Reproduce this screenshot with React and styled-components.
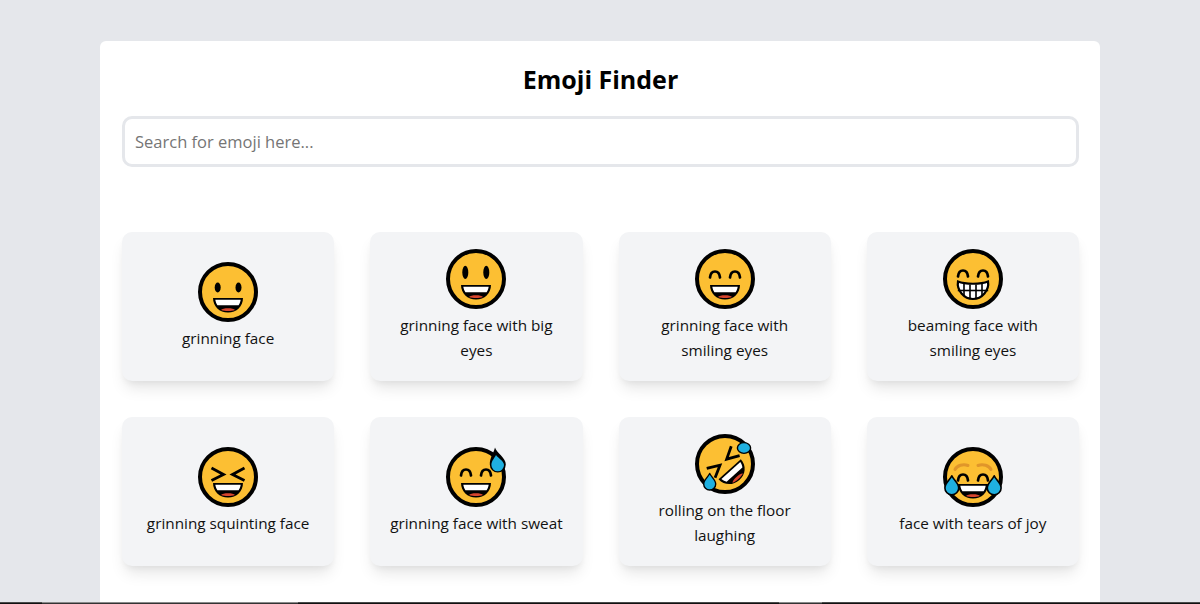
import React from 'react';
import styled, { createGlobalStyle } from 'styled-components';

const GlobalStyle = createGlobalStyle`
  html, body {
    margin: 0;
    padding: 0;
    background: #e5e7eb;
    font-family: "Open Sans", "Liberation Sans", sans-serif;
    color: #111;
  }
  * { box-sizing: border-box; }
`;

const Page = styled.div`
  display: flex;
  flex-direction: column;
  height: 604px;
  overflow: hidden;
`;
const Main = styled.main`
  flex: 1;
  min-height: 0;
  overflow: hidden;
  padding-top: 41px;
`;
const Panel = styled.section`
  width: 1000px;
  height: 700px;
  margin: 0 auto;
  padding: 20px 21px 20px 22px;
  background: #fff;
  border-radius: 6px;
`;
const Title = styled.h1`
  margin: 0 0 19px;
  font-size: 25px;
  line-height: 36px;
  font-weight: 700;
  text-align: center;
  color: #000;
`;
const SearchInput = styled.input`
  display: block;
  width: 100%;
  height: 51px;
  padding: 0 10px;
  border: 3px solid #e5e7eb;
  border-radius: 10px;
  background: #fff;
  font: 400 16.5px "Open Sans", sans-serif;
  outline: none;
  &::placeholder { color: #757575; opacity: 1; }
`;
const Grid = styled.div`
  display: grid;
  grid-template-columns: repeat(4, 1fr);
  gap: 36px;
  margin-top: 65px;
`;
const Card = styled.div`
  display: flex;
  flex-direction: column;
  align-items: center;
  justify-content: center;
  gap: 4px;
  height: 149px;
  padding: 0 16px 1px;
  background: #f3f4f6;
  border-radius: 10px;
  box-shadow: 0 10px 15px -3px rgba(0, 0, 0, 0.1), 0 4px 6px -2px rgba(0, 0, 0, 0.05);
`;
const Label = styled.p`
  margin: 0;
  max-width: 178px;
  font-size: 15.3px;
  line-height: 25px;
  text-align: center;
  color: #111;
`;
const EdgeBar = styled.div`
  display: flex;
  flex: none;
  height: 2px;
`;
const EdgeSegment = styled.div`
  flex: ${(p) => (p.$width ? `0 0 ${p.$width}px` : 1)};
  background: ${(p) => (p.$lit
    ? 'linear-gradient(#8a8a8a 50%, #333 50%)'
    : 'linear-gradient(#4a4a4a 50%, #111 50%)')};
`;

const YELLOW = '#fcbf33';
const BLUE = '#1fb0e0';
const RED = '#d8452e';

const Face = ({ children }) => (
  <svg width="60" height="60" viewBox="0 0 60 60" style={{ flex: 'none', overflow: 'visible' }}>
    <circle cx="30" cy="30" r="28" fill={YELLOW} stroke="#000" strokeWidth="4" />
    {children}
  </svg>
);

// open mouth shared by most of the faces, dy moves it down from the default spot
const Mouth = ({ dy = 0 }) => (
  <g transform={`translate(0 ${dy})`}>
    <path d="M15 36H45C45 44.5 38.5 50.5 30 50.5S15 44.5 15 36Z" fill="#000" />
    <path d="M17.3 37.8H42.7C42.4 40 41.6 41.9 40.6 43.2H19.4C18.4 41.9 17.6 40 17.3 37.8Z" fill="#fff" />
    <path d="M23 48C24.5 45.6 35.5 45.6 37 48C33 49.4 27 49.4 23 48Z" fill={RED} />
  </g>
);

const SmilingEyes = ({ dy = 0 }) => (
  <g fill="none" stroke="#000" strokeWidth="2.7" strokeLinecap="round" transform={`translate(0 ${dy})`}>
    <path d="M15 28.5C15.8 20.5 24.2 20.5 25 28.5" />
    <path d="M35 28.5C35.8 20.5 44.2 20.5 45 28.5" />
  </g>
);

const SquintEyes = () => (
  <g fill="none" stroke="#000" strokeWidth="2.8">
    <path d="M13.5 21L25.5 27.5L13.5 33.5" />
    <path d="M46.5 21L34.5 27.5L46.5 33.5" />
  </g>
);

const Teeth = () => (
  <g>
    <path d="M15 32.5C22 35.5 38 35.5 45 32.5C46.5 41 39 50 30 50S13.5 41 15 32.5Z" fill="#fff" stroke="#000" strokeWidth="2.2" />
    <g stroke="#000" strokeWidth="1.6">
      <path d="M14.8 41.5H45.2" />
      <path d="M21 34.8V47M27 35.5V49.8M33 35.5V49.8M39 34.8V47" />
    </g>
  </g>
);

const Tear = ({ x, y, scale = 1 }) => (
  <path
    transform={`translate(${x} ${y}) scale(${scale})`}
    d="M0 -8C2 -4 6 -1.5 6 2.5A6 6 0 0 1 -6 2.5C-6 -1.5 -2 -4 0 -8Z"
    fill={BLUE}
    stroke="#000"
    strokeWidth="1.4"
    strokeLinejoin="round"
  />
);

const emojis = [
  {
    name: 'grinning face',
    art: (
      <Face>
        <ellipse cx="19.7" cy="25.5" rx="3" ry="5" />
        <ellipse cx="40.5" cy="25.5" rx="3" ry="5" />
        <Mouth />
      </Face>
    ),
  },
  {
    name: 'grinning face with big eyes',
    art: (
      <Face>
        <ellipse cx="19.3" cy="23.4" rx="3" ry="6.6" />
        <ellipse cx="40.3" cy="23.4" rx="3" ry="6.6" />
        <Mouth />
      </Face>
    ),
  },
  {
    name: 'grinning face with smiling eyes',
    art: (
      <Face>
        <SmilingEyes />
        <Mouth />
      </Face>
    ),
  },
  {
    name: 'beaming face with smiling eyes',
    art: (
      <Face>
        <SmilingEyes dy={-1} />
        <Teeth />
      </Face>
    ),
  },
  {
    name: 'grinning squinting face',
    art: (
      <Face>
        <SquintEyes />
        <Mouth />
      </Face>
    ),
  },
  {
    name: 'grinning face with sweat',
    art: (
      <Face>
        <SmilingEyes />
        <Mouth />
        <path d="M49 0.5C50 5 60 11 59.8 17.5A8 8 0 0 1 43.8 17.5C43.6 11 48 5 49 0.5Z" fill="#000" />
        <path d="M50 8C52 11 58 14 58 18A6.3 6.3 0 0 1 45.4 18C45.4 14 48.5 11 50 8Z" fill={BLUE} />
      </Face>
    ),
  },
  {
    name: 'rolling on the floor laughing',
    art: (
      <Face>
        <g transform="rotate(-42 30 30)">
          <SquintEyes />
          <Mouth dy={1} />
        </g>
        <ellipse cx="49" cy="14" rx="6.6" ry="5.4" fill={BLUE} stroke="#000" strokeWidth="1.4" />
        <Tear x={14.7} y={47.5} />
      </Face>
    ),
  },
  {
    name: 'face with tears of joy',
    art: (
      <Face>
        <g fill="none" stroke="#e0962a" strokeWidth="3" strokeLinecap="round">
          <path d="M12 22.5C14 18.5 20 16.5 25 18.5" />
          <path d="M48 22.5C46 18.5 40 16.5 35 18.5" />
        </g>
        <SmilingEyes dy={5} />
        <Mouth dy={1} />
        <Tear x={8.8} y={38} scale={1.15} />
        <Tear x={51.2} y={38} scale={1.15} />
      </Face>
    ),
  },
];

const App = () => (
  <Page>
    <GlobalStyle />
    <Main>
      <Panel>
        <Title>Emoji Finder</Title>
        <SearchInput type="text" placeholder="Search for emoji here..." />
        <Grid>
          {emojis.map(({ name, art }) => (
            <Card key={name}>
              {art}
              <Label>{name}</Label>
            </Card>
          ))}
        </Grid>
      </Panel>
    </Main>
    <EdgeBar>
      <EdgeSegment $width={42} />
      <EdgeSegment $width={256} $lit />
      <EdgeSegment $width={481} />
      <EdgeSegment $width={43} $lit />
      <EdgeSegment />
    </EdgeBar>
  </Page>
);

export default App;
